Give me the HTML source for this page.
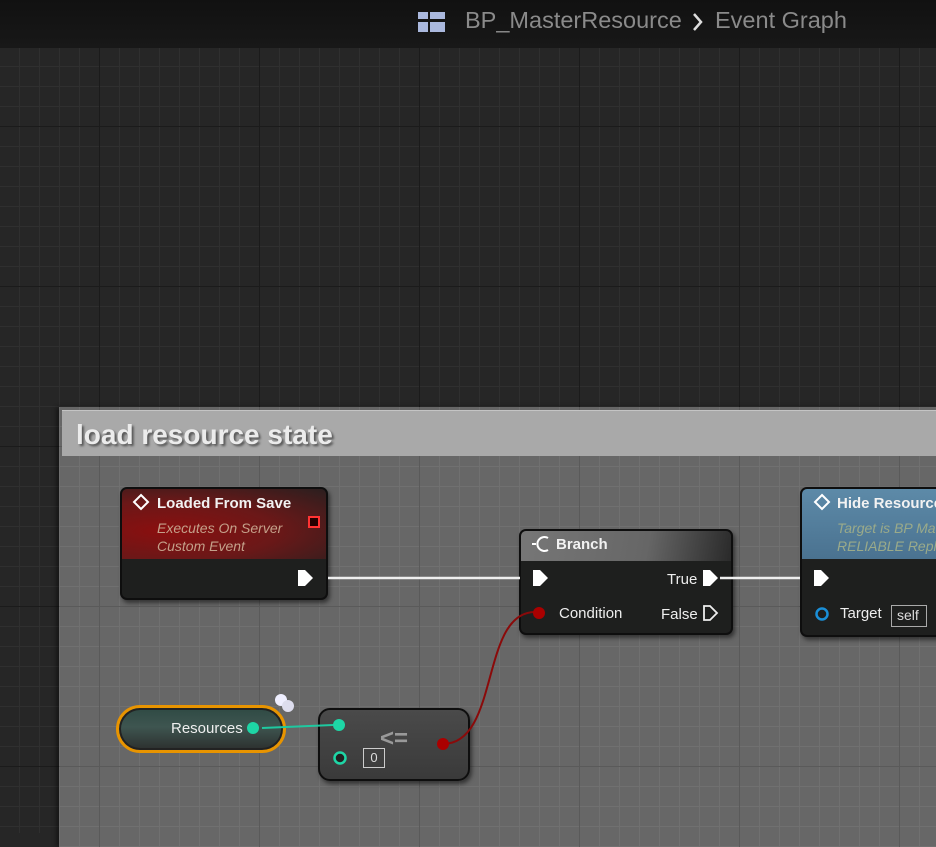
<!DOCTYPE html>
<html><head><style>
*{margin:0;padding:0;box-sizing:border-box}
body{width:936px;height:833px;overflow:hidden;background:#262626;font-family:"Liberation Sans",sans-serif;position:relative}
.grid{position:absolute;inset:0;
background-image:
linear-gradient(to right,#1b1b1b 0 1px,transparent 1px),
linear-gradient(to bottom,#1b1b1b 0 1px,transparent 1px),
linear-gradient(to right,#2f2f2f 0 1px,transparent 1px),
linear-gradient(to bottom,#2f2f2f 0 1px,transparent 1px);
background-size:160px 160px,160px 160px,20px 20px,20px 20px;
background-position:99px 0,0 126px,19px 0,0 6px}
.top{position:absolute;left:0;top:0;width:936px;height:48px;background:linear-gradient(#111,#181818)}
.title{position:absolute;top:7px;font-size:23.5px;color:#8a8a8a;white-space:nowrap}
.comment{position:absolute;left:59px;top:407px;width:900px;height:440px;background:#676767;
background-image:
linear-gradient(to right,#5a5a5a 0 1px,transparent 1px),
linear-gradient(to bottom,#5a5a5a 0 1px,transparent 1px),
linear-gradient(to right,#707070 0 1px,transparent 1px),
linear-gradient(to bottom,#707070 0 1px,transparent 1px);
background-size:160px 160px,160px 160px,20px 20px,20px 20px;
background-position:40px 0,0 39px,0 0,0 19px;box-shadow:-3px 0 4px rgba(0,0,0,.4)}
.chead{position:absolute;left:3px;top:3px;right:0;height:46px;background:#a9a9a9;border-top:1px solid #c4c4c4}
.chead span{position:absolute;left:14px;top:8px;font-size:28px;font-weight:bold;color:#ececec;text-shadow:2px 2px 2px #555}
.node{position:absolute;background:#1e1f1e;border:2px solid #0e0e0e;border-radius:7px;box-shadow:2px 3px 4px rgba(0,0,0,.5);color:#eee;overflow:hidden}
.hd{position:absolute;left:0;right:0;top:0}
.nt{position:absolute;font-size:15px;font-weight:bold;color:#f2f2f2}
.it{position:absolute;font-size:14px;font-style:italic}
.lbl{position:absolute;font-size:15px;color:#eee}
svg{position:absolute;left:0;top:0}
</style></head><body>
<div class="grid"></div>
<div class="top"></div>
<svg width="936" height="48"><g fill="#aab8dd"><rect x="418" y="12" width="10" height="7"/><rect x="430" y="12" width="15" height="7"/><rect x="418" y="22" width="10" height="10"/><rect x="430" y="22" width="15" height="10"/></g>
<path d="M694 14 L701 22 L694 30" stroke="#ddd" stroke-width="2.5" fill="none"/></svg>
<div class="title" style="left:465px">BP_MasterResource</div>
<div class="title" style="left:715px">Event Graph</div>
<div class="comment"><div class="chead"><span>load resource state</span></div></div>

<div class="node" style="left:120px;top:487px;width:208px;height:113px">
 <div class="hd" style="height:70px;background:radial-gradient(ellipse at 20% 60%,#8a0f0f,#6a1818 50%,#2a1f1f)"></div>
 <div class="nt" style="left:35px;top:6px">Loaded From Save</div>
 <div class="it" style="left:35px;top:31px;color:#c4a08a">Executes On Server</div>
 <div class="it" style="left:35px;top:49px;color:#c4a08a">Custom Event</div>
 <div style="position:absolute;left:186px;top:27px;width:12px;height:12px;border:2px solid #f33;background:#200"></div>
</div>

<div class="node" style="left:519px;top:529px;width:214px;height:106px">
 <div class="hd" style="height:30px;background:linear-gradient(100deg,#777,#666 60%,#2a2a2a)"></div>
 <div class="nt" style="left:35px;top:5px">Branch</div>
 <div class="lbl" style="left:38px;top:74px">Condition</div>
 <div class="lbl" style="left:146px;top:40px">True</div>
 <div class="lbl" style="left:140px;top:75px">False</div>
</div>

<div class="node" style="left:800px;top:487px;width:150px;height:150px">
 <div class="hd" style="height:70px;background:linear-gradient(#5d8aa8,#4a7290)"></div>
 <div class="nt" style="left:35px;top:6px">Hide Resource</div>
 <div class="it" style="left:35px;top:31px;color:#9aaa8a">Target is BP Ma</div>
 <div class="it" style="left:35px;top:49px;color:#9aaa8a">RELIABLE Repl</div>
 <div class="lbl" style="left:38px;top:116px">Target</div>
 <div style="position:absolute;left:89px;top:116px;width:36px;height:22px;border:1.5px solid #aaa;font-size:14px;color:#ddd;padding-left:5px;line-height:19px">self</div>
</div>

<div style="position:absolute;left:116px;top:705px;width:170px;height:48px;border-radius:24px;border:3px solid #e89400;background:linear-gradient(#2f4a44,#3e5550 45%,#2c2f2e);box-shadow:inset 0 0 0 2px #222"></div>
<div class="lbl" style="left:171px;top:720px;font-size:15px">Resources</div>

<div class="node" style="left:318px;top:708px;width:152px;height:73px;background:linear-gradient(#4a4a4a,#3a3a3a);border-radius:12px">
 <div style="position:absolute;left:43px;top:38px;width:22px;height:20px;border:1.5px solid #ccc;font-size:13px;color:#ddd;text-align:center;line-height:17px">0</div>
 <div style="position:absolute;left:60px;top:15px;font-size:24px;font-weight:bold;color:#999">&lt;=</div>
</div>

<svg width="936" height="833">
 <path d="M328 578 L520 578 M720 578 L800 578" stroke="#eee" stroke-width="2.5"/>
 <path d="M443 744 C 500 744, 480 612, 535 612" stroke="#8a0a0a" stroke-width="2" fill="none"/>
 <path d="M262 728 L333 725" stroke="#1ec9a0" stroke-width="2"/>
 <path d="M298 570 h7 l8 8 l-8 8 h-7 z" fill="#fff"/>
 <path d="M533 570 h7 l8 8 l-8 8 h-7 z" fill="#fff"/>
 <path d="M703 570 h7 l8 8 l-8 8 h-7 z" fill="#fff"/>
 <path d="M704 606 h6 l7 7 l-7 7 h-6 z" fill="none" stroke="#eee" stroke-width="1.8"/>
 <path d="M814 570 h7 l8 8 l-8 8 h-7 z" fill="#fff"/>
 <circle cx="539" cy="613" r="6" fill="#a00"/>
 <circle cx="443" cy="744" r="6" fill="#a00"/>
 <circle cx="822" cy="614" r="5.5" fill="none" stroke="#1a8fd8" stroke-width="2.5"/>
 <circle cx="253" cy="728" r="6" fill="#1ed6a6"/>
 <circle cx="339" cy="725" r="6" fill="#1ed6a6"/>
 <circle cx="340" cy="758" r="5.5" fill="#222" stroke="#1ed6a6" stroke-width="2.5"/>
 <circle cx="281" cy="700" r="6" fill="#eef"/><circle cx="288" cy="706" r="6" fill="#dde"/>
 <g stroke="#fff" stroke-width="2" fill="none"><path d="M141 495 l7 7 -7 7 -7 -7z"/><path d="M822 495 l7 7 -7 7 -7 -7z"/><path d="M548 538 a7 7 0 1 0 0 12 M532 544 h4"/></g>
</svg>
</body></html>
